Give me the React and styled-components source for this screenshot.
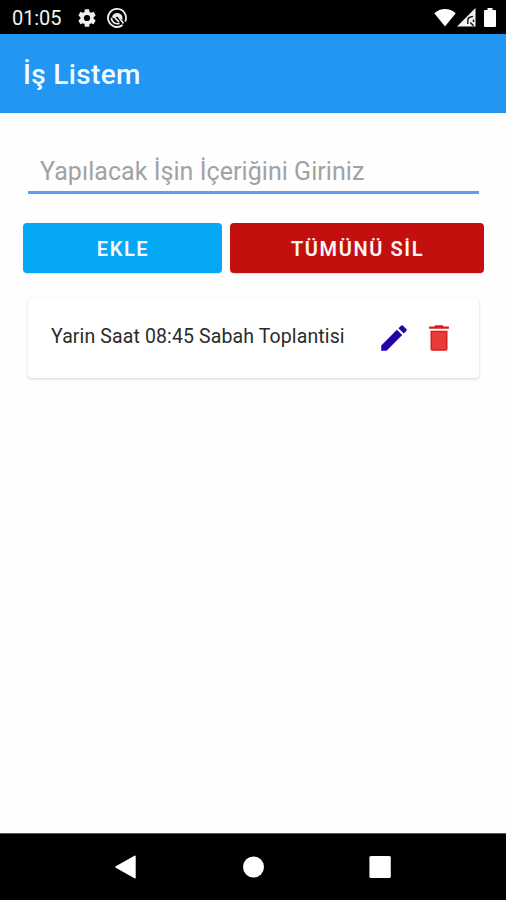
import React from "react";
import styled, { createGlobalStyle } from "styled-components";

const GlobalStyle = createGlobalStyle`
  * { box-sizing: border-box; }
  body { margin: 0; background: #fff; font-family: Roboto, sans-serif; }
`;

const Screen = styled.div`
  width: 506px;
  height: 900px;
  display: flex;
  flex-direction: column;
  background: #fefefe;
  overflow: hidden;
`;

const StatusBar = styled.div`
  height: 34px;
  flex: none;
  background: #000;
  color: #f2f2f2;
  display: flex;
  align-items: center;
  padding: 2px 9px 0 12px;
`;

const Clock = styled.span`
  width: 64px;
  font-size: 20px;
  line-height: 24px;
  letter-spacing: -0.1px;
`;

const StatusIcon = styled.svg`
  display: block;
  flex: none;
  width: ${(p) => p.$w}px;
  height: ${(p) => p.$h}px;
  margin-left: ${(p) => p.$gap || 0}px;
  margin-top: -1px;
`;

const Spacer = styled.div`
  flex: 1;
`;

const AppBar = styled.header`
  height: 79px;
  flex: none;
  background: #2196f3;
  border-bottom: 1px solid #1e90ea;
  display: flex;
  align-items: center;
  padding: 4px 23px 0;
`;

const Title = styled.h1`
  margin: 0;
  color: #f4faff;
  font-size: 28px;
  font-weight: 500;
  line-height: 34px;
  letter-spacing: 0.35px;
`;

const Content = styled.main`
  flex: 1;
  display: flex;
  flex-direction: column;
`;

const TaskInput = styled.input`
  height: 46px;
  margin: 35px 27px 0 28px;
  padding: 4px 12px 0;
  border: 0;
  border-bottom: 3px solid #5c9ff0;
  border-radius: 0;
  outline: 0;
  background: transparent;
  font: 400 25px/30px Roboto, sans-serif;
  letter-spacing: 0.05px;
  color: #222;
  &::placeholder { color: #a2a2a2; opacity: 1; }
`;

const ButtonRow = styled.div`
  display: flex;
  gap: 8px;
  margin: 29px 22px 0 23px;
`;

const ActionButton = styled.button`
  width: ${(p) => p.$width}px;
  height: 50px;
  padding: 2px 0 0 1px;
  border: 0;
  border-radius: 4px;
  background: ${(p) => p.$color};
  color: #fbf5f5;
  font: 600 20px/24px Roboto, sans-serif;
  letter-spacing: 1.6px;
  box-shadow: 0 1px 1px rgba(0, 0, 0, 0.12);
`;

const TaskCard = styled.article`
  height: 80px;
  margin: 25px 27px 0 28px;
  padding: 0 23px;
  display: flex;
  align-items: center;
  background: #fff;
  border-radius: 4px;
  box-shadow: 0 1px 3px rgba(0, 0, 0, 0.18);
`;

const TaskText = styled.span`
  flex: 1;
  color: #2b2b2b;
  font-size: 19.5px;
  line-height: 24px;
  letter-spacing: 0.12px;
  padding-bottom: 2px;
  white-space: nowrap;
`;

const IconButton = styled.button`
  width: 34px;
  height: 34px;
  padding: 0;
  border: 0;
  background: none;
  color: ${(p) => p.$color};
  & + & { margin-left: 11px; }
  svg { display: block; width: 34px; height: 34px; fill: currentColor; }
`;

const NavBar = styled.nav`
  height: 67px;
  flex: none;
  border-top: 1px solid #555;
  background: #000;
  display: flex;
  justify-content: space-between;
  align-items: center;
  padding: 0 115px 0 114px;
  svg { display: block; fill: #fff; }
`;

export default function App() {
  return (
    <>
      <GlobalStyle />
      <Screen>
        <StatusBar>
          <Clock>01:05</Clock>
          <StatusIcon $w={22} $h={22} viewBox="0 0 24 24" fill="#f0f0f0">
            <path d="M19.14 12.94c.04-.3.06-.61.06-.94 0-.32-.02-.64-.07-.94l2.03-1.58c.18-.14.23-.41.12-.61l-1.92-3.32c-.12-.22-.37-.29-.59-.22l-2.39.96c-.5-.38-1.03-.7-1.62-.94l-.36-2.54c-.04-.24-.24-.41-.48-.41h-3.84c-.24 0-.43.17-.47.41l-.36 2.54c-.59.24-1.13.57-1.62.94l-2.39-.96c-.22-.08-.47 0-.59.22L2.74 8.87c-.12.21-.08.47.12.61l2.03 1.58c-.05.3-.09.63-.09.94s.02.64.07.94l-2.03 1.58c-.18.14-.23.41-.12.61l1.92 3.32c.12.22.37.29.59.22l2.39-.96c.5.38 1.03.7 1.62.94l.36 2.54c.05.24.24.41.48.41h3.84c.24 0 .44-.17.47-.41l.36-2.54c.59-.24 1.13-.56 1.62-.94l2.39.96c.22.08.47 0 .59-.22l1.92-3.32c.12-.22.07-.47-.12-.61l-2.01-1.58zM12 15.4a3.4 3.4 0 1 1 0-6.8 3.4 3.4 0 0 1 0 6.8z" />
          </StatusIcon>
          <StatusIcon $w={20} $h={20} $gap={9} viewBox="0 0 20 20" fill="none" stroke="#eee">
            <path d="M15.6 17A9 9 0 1 1 18.2 13.7" strokeWidth="1.8" />
            <path d="M12.6 15.2A5.8 5.8 0 0 1 4.4 9.8" strokeWidth="1.6" />
            <path d="M5 9.2C6.2 3.8 13.6 3.6 15.4 8.6V12L11.6 8.8 9.2 8.9 7.6 10.6Z" fill="#eee" stroke="none" />
            <path d="M11.5 8.8 16.5 15.5M8.2 10.2 12 14" strokeWidth="1.7" />
          </StatusIcon>
          <Spacer />
          <StatusIcon $w={22} $h={19} viewBox="0 0 22 19" fill="#fff">
            <path d="M0.3 5.2C6.3-.5 15.7-.5 21.7 5.2L11 18.5Z" />
          </StatusIcon>
          <StatusIcon $w={19} $h={19} $gap={1} viewBox="0 0 19 19">
            <path d="M0 18.5 18.5 0V18.5Z" fill="#f3f3f3" />
            <path d="M10.8 16V12.4Q10.8 9.8 13 9.2L16 8.4M13.4 14.5L16.5 17.8M16.5 11.5V14" stroke="#111" strokeWidth="1.4" fill="none" />
          </StatusIcon>
          <StatusIcon $w={14} $h={19} $gap={7} viewBox="0 0 14 19" fill="#fff">
            <path d="M4.5 0H9.5V2H12Q13 2 13 3V18Q13 19 12 19H2Q1 19 1 18V3Q1 2 2 2H4.5Z" />
          </StatusIcon>
        </StatusBar>
        <AppBar>
          <Title>İş Listem</Title>
        </AppBar>
        <Content>
          <TaskInput placeholder="Yapılacak İşin İçeriğini Giriniz" />
          <ButtonRow>
            <ActionButton $width={199} $color="#04a8f4">EKLE</ActionButton>
            <ActionButton $width={254} $color="#c40f0f">TÜMÜNÜ SİL</ActionButton>
          </ButtonRow>
          <TaskCard>
            <TaskText>Yarin Saat 08:45 Sabah Toplantisi</TaskText>
            <IconButton $color="#2400a8" aria-label="Düzenle">
              <svg viewBox="0 0 24 24">
                <path d="M3 17.25V21h3.75L17.81 9.94l-3.75-3.75L3 17.25zM20.71 7.04a1 1 0 0 0 0-1.41l-2.34-2.34a1 1 0 0 0-1.41 0l-1.83 1.83 3.75 3.75 1.83-1.83z" />
              </svg>
            </IconButton>
            <IconButton $color="#dc1c1c" aria-label="Sil">
              <svg viewBox="0 0 24 24">
                <path d="M6 19.8c0 .7.5 1.2 1.2 1.2h9.6c.7 0 1.2-.5 1.2-1.2V6.8H6zM19 3.9h-3.5l-1-.9h-5l-1 .9H5v1.6h14z" />
                <path d="M7 7.8H17V20H7z" fill="#e83a38" />
              </svg>
            </IconButton>
          </TaskCard>
        </Content>
        <NavBar>
          <svg width="22" height="24" viewBox="0 0 22 24">
            <path d="M1.8 11.2 20.4 .7Q21.7 0 21.7 1.4V22.6Q21.7 24 20.4 23.3L1.8 12.8Q.3 12 1.8 11.2Z" />
          </svg>
          <svg width="22" height="22" viewBox="0 0 22 22">
            <circle cx="11.5" cy="11" r="10.5" />
          </svg>
          <svg width="22" height="22" viewBox="0 0 22 22">
            <rect x="0.4" y="0" width="21.4" height="22" rx="1.5" />
          </svg>
        </NavBar>
      </Screen>
    </>
  );
}
